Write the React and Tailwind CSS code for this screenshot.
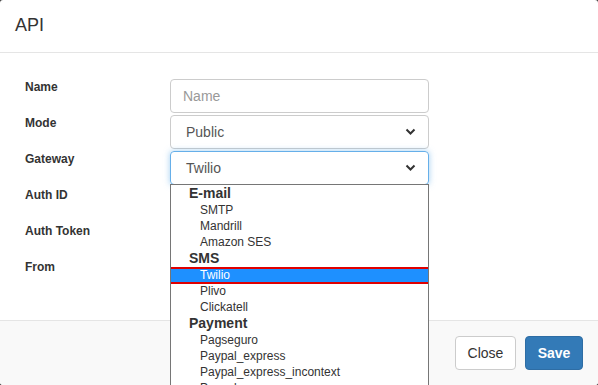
import { useState } from "react";

const font = { fontFamily: '"Liberation Sans", Arial, sans-serif' };

function Chevron() {
  return (
    <svg width="11" height="8" viewBox="0 0 11 8" className="absolute right-[12px] top-1/2 -translate-y-1/2">
      <polyline points="1.5,1.5 5.5,5.5 9.5,1.5" fill="none" stroke="#333" strokeWidth="2" />
    </svg>
  );
}

const groups = [
  { label: "E-mail", items: ["SMTP", "Mandrill", "Amazon SES"] },
  { label: "SMS", items: ["Twilio", "Plivo", "Clickatell"] },
  { label: "Payment", items: ["Pagseguro", "Paypal_express", "Paypal_express_incontext", "Paypal_pro", "Stripe"] },
];

function Dropdown({ value }) {
  return (
    <div className="absolute left-[170px] top-[184px] w-[259px] h-[260px] bg-white border border-[#767676] overflow-hidden">
      {groups.map(g => (
        <div key={g.label}>
          <div className="h-[17px] leading-[17px] pl-[18px] text-[14px] font-bold text-[#333]">{g.label}</div>
          {g.items.map(item => (
            <div
              key={item}
              className={`relative h-[16px] leading-[16px] pl-[29px] text-[12px] ${item === value ? "bg-[#1e90ff] text-white" : "text-[#333]"}`}
            >
              {item}
              {item === value && <span className="absolute left-[-2px] right-[-2px] top-0 bottom-[-1px] border-2 border-[#e00000]" />}
            </div>
          ))}
        </div>
      ))}
    </div>
  );
}

function App() {
  const [gateway] = useState("Twilio");
  const labels = ["Name", "Mode", "Gateway", "Auth ID", "Auth Token", "From"];

  return (
    <div style={font} className="w-[598px] h-[385px] bg-[#3c3c3c] overflow-hidden">
      <div className="relative w-full h-full bg-white rounded-[3px] flex flex-col overflow-hidden">
        <div className="h-[53px] shrink-0 border-b border-[#e5e5e5] px-[15px] flex items-center">
          <h4 className="text-[18px] text-[#333] leading-none -mt-[2px]">API</h4>
        </div>
        <div className="flex-1 pt-[26px] px-[25px]">
          {labels.map((label, i) => (
            <div key={label} className="flex h-[36px]">
              <label className="w-[145px] -mt-[1px] text-[12px] font-bold text-[#333]">{label}</label>
              {i === 0 && (
                <input
                  placeholder="Name"
                  className="w-[259px] h-[34px] px-[12px] text-[14px] text-[#555] placeholder-[#999] border border-[#ccc] rounded-[4px] outline-none"
                />
              )}
              {i === 1 && (
                <div className="relative w-[259px] h-[34px] border border-[#ccc] rounded-[4px] pl-[15px] flex items-center text-[14px] text-[#555]">
                  Public
                  <Chevron />
                </div>
              )}
              {i === 2 && (
                <div className="relative w-[259px] h-[34px] border border-[#66afe9] rounded-[4px] pl-[15px] flex items-center text-[14px] text-[#555] shadow-[0_0_6px_rgba(102,175,233,0.6)]">
                  {gateway}
                  <Chevron />
                </div>
              )}
            </div>
          ))}
        </div>
        <div className="h-[65px] shrink-0 border-t border-[#e5e5e5] bg-[#f9f9f9] flex items-start justify-end gap-[9px] pt-[15px] pr-[15px]">
          <button className="w-[61px] h-[34px] bg-white border border-[#ccc] rounded-[4px] text-[14px] text-[#333]">Close</button>
          <button className="w-[58px] h-[34px] bg-[#337ab7] border border-[#2e6da4] rounded-[4px] text-[14px] font-bold text-white">Save</button>
        </div>
        <Dropdown value={gateway} />
      </div>
    </div>
  );
}

export default App;
